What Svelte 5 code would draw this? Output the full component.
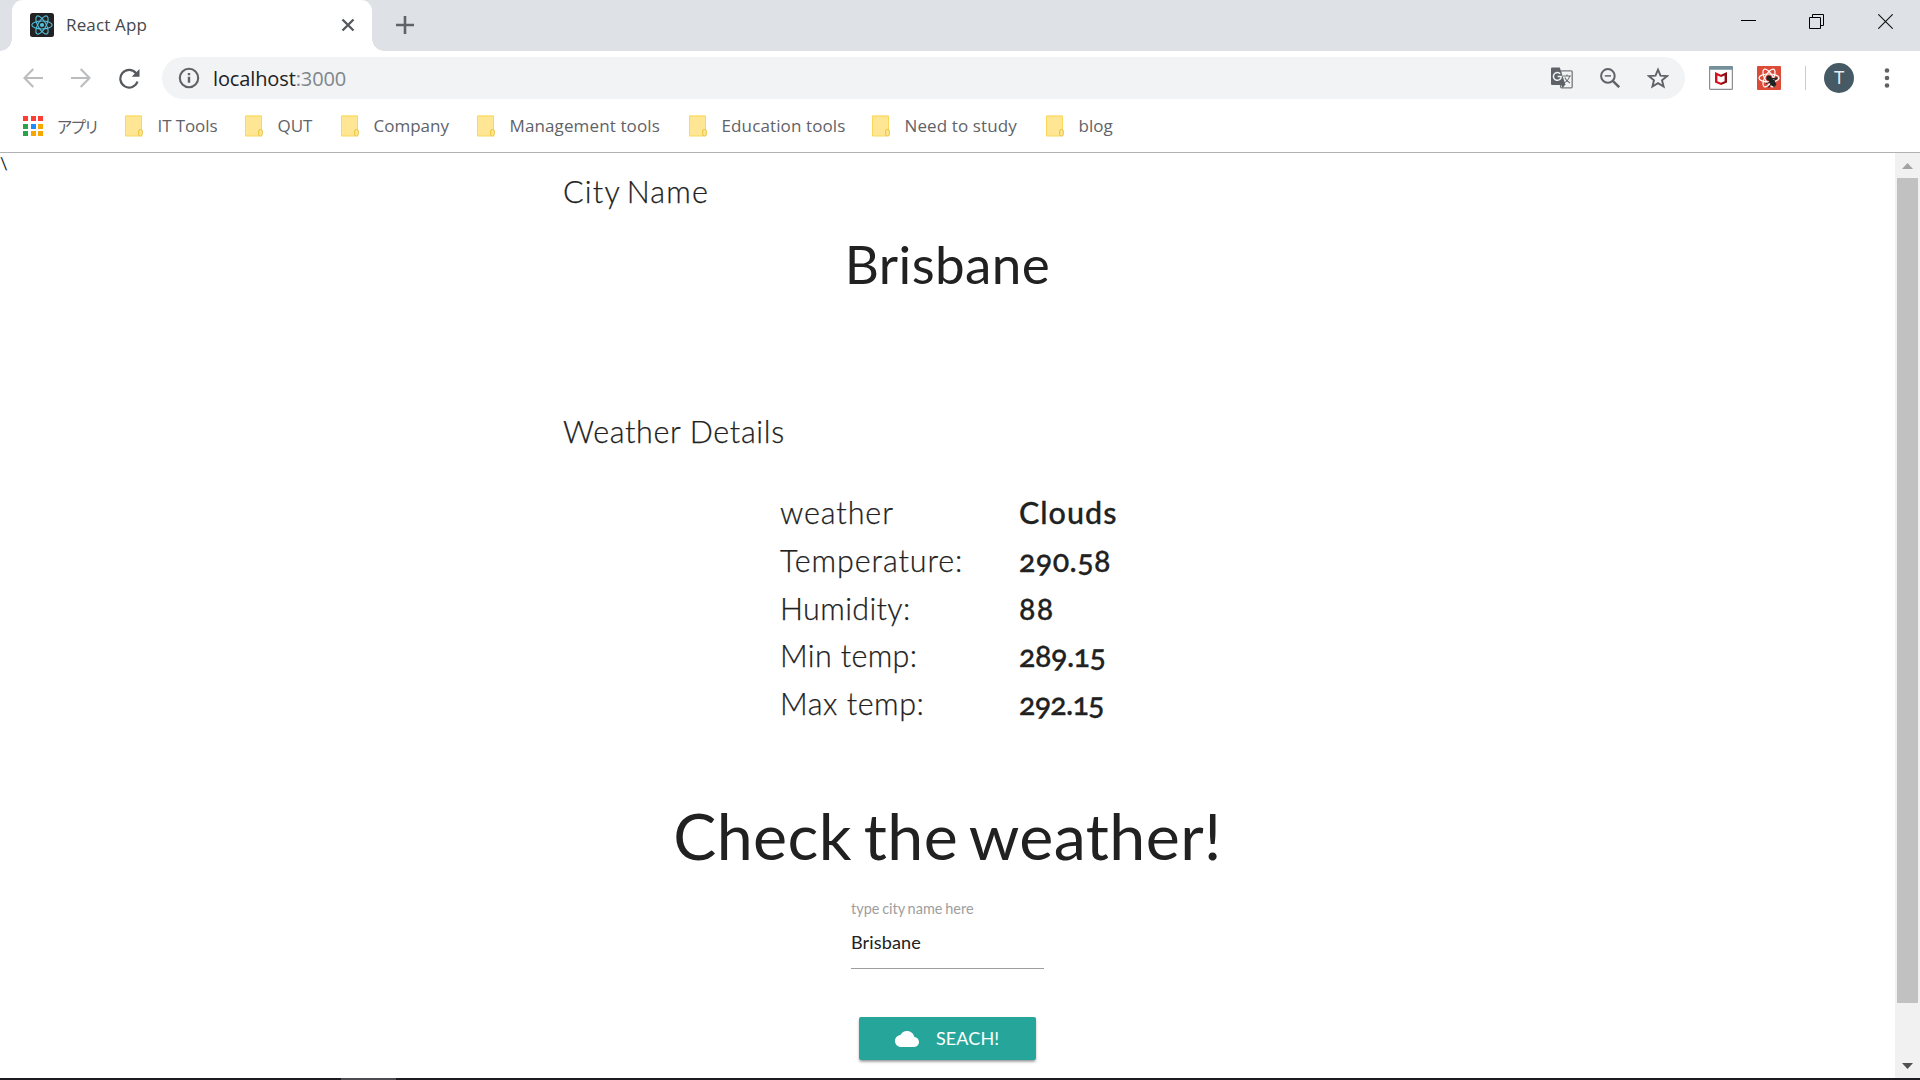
<script>
  const bookmarks = [
    { name: 'IT Tools', cls: 'it' },
    { name: 'QUT', cls: 'qut' },
    { name: 'Company', cls: 'company' },
    { name: 'Management tools', cls: 'management' },
    { name: 'Education tools', cls: 'education' },
    { name: 'Need to study', cls: 'study' },
    { name: 'blog', cls: 'blog' }
  ];
  const details = [
    { label: 'weather', value: 'Clouds', cls: 'r-weather' },
    { label: 'Temperature:', value: '290.58', cls: 'r-temp' },
    { label: 'Humidity:', value: '88', cls: 'r-hum' },
    { label: 'Min temp:', value: '289.15', cls: 'r-min' },
    { label: 'Max temp:', value: '292.15', cls: 'r-max' }
  ];
  const appColors = ['#ff3d33', '#ff3d33', '#ff3d33', '#2ba24c', '#1a8cff', '#f9a600', '#2ba24c', '#f9a600', '#f9a600'];
  let city = $state('Brisbane');
</script>

<div class="window">
  <header class="titlebar">
    <div class="tab">
      <svg class="favicon" viewBox="0 0 24 24">
        <rect width="24" height="24" rx="2.5" fill="#222" />
        <g fill="none" stroke="#53c1de" stroke-width="1.1">
          <ellipse cx="12" cy="12" rx="10.2" ry="4" />
          <ellipse cx="12" cy="12" rx="10.2" ry="4" transform="rotate(60 12 12)" />
          <ellipse cx="12" cy="12" rx="10.2" ry="4" transform="rotate(120 12 12)" />
        </g>
        <circle cx="12" cy="12" r="2.1" fill="#53c1de" />
      </svg>
      <span class="tab-title">React App</span>
      <svg class="tab-close" viewBox="0 0 14 14"><path d="M1.5 1.5l11 11M12.5 1.5l-11 11" stroke="#55585c" stroke-width="2.3" /></svg>
    </div>
    <svg class="newtab" viewBox="0 0 18 18"><path d="M9 0v18M0 9h18" stroke="#5f6368" stroke-width="2.6" /></svg>
    <div class="controls">
      <svg viewBox="0 0 15 15"><path d="M0 6.5h15" stroke="#000" /></svg>
      <svg viewBox="0 0 15 15"><path d="M.5 3.5h11v11H.5zM3.5 3.5v-3h11v11h-3" fill="none" stroke="#000" /></svg>
      <svg viewBox="0 0 15 15"><path d="M.3.3l14.4 14.4M14.7.3L.3 14.7" stroke="#111" stroke-width="1.1" /></svg>
    </div>
  </header>

  <nav class="toolbar">
    <svg class="nav" viewBox="0 0 20 20"><path d="M20 10H2M10.3 1L1.5 10l8.8 9" fill="none" stroke="#babcbe" stroke-width="2.1" /></svg>
    <svg class="nav" viewBox="0 0 20 20"><path d="M0 10h18M9.700 1l8.800 9-8.800 9" fill="none" stroke="#babcbe" stroke-width="2.1" /></svg>
    <svg class="nav reload" viewBox="0 0 21 21">
      <path d="M17 5.200A8.800 8.800 0 1 0 18.500 13.500" fill="none" stroke="#55585c" stroke-width="2.200" />
      <path d="M20.500 1v7.800h-7.800z" fill="#55585c" />
    </svg>
    <div class="omnibox">
      <svg class="info" viewBox="0 0 22 22">
        <circle cx="11" cy="11" r="9.200" fill="none" stroke="#5f6368" stroke-width="2.100" />
        <path d="M11 9.800v6M11 6v2.300" stroke="#5f6368" stroke-width="2.400" />
      </svg>
      <span class="host">localhost</span><span class="port">:3000</span>
      <div class="actions">
        <svg class="translate" viewBox="0 0 22 22">
          <rect x="9.600" y="3.800" width="11.600" height="17" rx="1" fill="#f1f3f4" stroke="#76797d" stroke-width="1.300" />
          <path d="M12 9h8M16 7.400V9M18.600 9c-.6 3-3 5.500-5.400 6.800M13.800 10.500c1 2.600 3.200 4.600 5.200 5.600" fill="none" stroke="#6c7074" stroke-width="1.100" />
          <path d="M1.300.5h7.500l5.700 17.500H1.300C.6 18 0 17.500 0 16.700V1.800C0 1 .6.500 1.300.500z" fill="#5f6368" />
          <path d="M10 17.500h4.500l-3 3.500z" fill="#5f6368" />
          <path d="M9.200 6.800A3.900 3.900 0 1 0 10.200 9.400H6.600" fill="none" stroke="#f1f3f4" stroke-width="1.500" />
        </svg>
        <svg class="zoom" viewBox="0 0 20 20">
          <circle cx="7.900" cy="7.900" r="6.800" fill="none" stroke="#5f6368" stroke-width="2" />
          <path d="M4.800 7.900h6.200" stroke="#5f6368" stroke-width="1.500" />
          <path d="M12.800 12.800l6.400 6.400" stroke="#5f6368" stroke-width="2.500" />
        </svg>
        <svg class="star" viewBox="0 0 22 22">
          <path d="M11 2.600l2.500 6 6.500.5-5 4.200 1.600 6.300L11 16.200l-5.600 3.400L7 13.300 2 9.100l6.500-.5z" fill="none" stroke="#5f6368" stroke-width="1.900" />
        </svg>
      </div>
    </div>
    <svg class="ext" viewBox="0 0 24 24">
      <rect x=".6" y=".6" width="22.800" height="22.800" rx="1" fill="#fcfcfc" stroke="#8b8f92" stroke-width="1.200" />
      <path d="M0 1.200Q0 0 1.200 0h21.600Q24 0 24 1.200V3.700H0z" fill="#75909b" />
      <path d="M6 6l6 2.800V11L8.400 9.400v5.800L12 16.800V19l-6-2.400z" fill="#d50f1c" />
      <path d="M18 6l-6 2.800V11l3.600-1.600v5.800L12 16.800V19l6-2.400z" fill="#8c0a12" />
    </svg>
    <svg class="ext ext-react" viewBox="0 0 24 24">
      <rect width="24" height="24" rx="1" fill="#dc4a38" />
      <g fill="none" stroke="#fff" stroke-width="1.200">
        <ellipse cx="12" cy="12" rx="10" ry="4" />
        <ellipse cx="12" cy="12" rx="10" ry="4" transform="rotate(60 12 12)" />
        <ellipse cx="12" cy="12" rx="10" ry="4" transform="rotate(120 12 12)" />
      </g>
      <circle cx="12" cy="12" r="2.600" fill="#222" />
      <ellipse cx="15.500" cy="16.300" rx="2.600" ry="4.600" transform="rotate(-38 15.500 16.300)" fill="#222" />
      <path d="M9 17.500l4-1M11.500 21.500l3-4M13.500 12.500l6 .200-.5-1.500M16 15l4-2.500M17 21.500v-3" fill="none" stroke="#222" stroke-width="1.200" />
    </svg>
    <span class="divider"></span>
    <span class="avatar">T</span>
    <svg class="menu" viewBox="0 0 6 22">
      <circle cx="3" cy="3.500" r="2.300" /><circle cx="3" cy="11" r="2.300" /><circle cx="3" cy="18.500" r="2.300" />
    </svg>
  </nav>

  <div class="bookmarks">
    <div class="apps">
      <span class="apps-grid">
        {#each appColors as color}<i style:background={color}></i>{/each}
      </span>
      <span class="apps-label">アプリ</span>
    </div>
    {#each bookmarks as b}
      <div class="bookmark">
        <svg class="folder" viewBox="0 0 18 22">
          <path d="M0 .500h16.500V21H0z" fill="#ffe694" />
          <path d="M.5 1h16v14M.5 1v20H14" fill="none" stroke="#fbd75b" />
          <rect x="13.700" y="14.500" width="3.600" height="6.600" rx="1.600" fill="#ffe694" stroke="#e6c23a" />
        </svg>
        <span class={b.cls}>{b.name}</span>
      </div>
    {/each}
  </div>

  <div class="viewport">
    <main>
      <div class="stray">\</div>
      <h5 class="city-heading">City Name</h5>
      <h3>{city}</h3>
      <h5 class="details-heading">Weather Details</h5>
      <dl>
        {#each details as d}
          <dt class={d.cls}>{d.label}</dt>
          <dd class={d.cls}>{d.value}</dd>
        {/each}
      </dl>
      <h2>Check the weather!</h2>
      <form onsubmit={(e) => e.preventDefault()}>
        <label for="city">type city name here</label>
        <input id="city" bind:value={city} />
        <button>
          <svg viewBox="0 0 24 16"><path d="M19.350 6.040C18.670 2.590 15.640 0 12 0 9.110 0 6.600 1.640 5.350 4.040 2.340 4.360 0 6.910 0 10c0 3.310 2.690 6 6 6h13c2.760 0 5-2.240 5-5 0-2.640-2.050-4.780-4.650-4.960z" fill="#fff" /></svg>
          <span>SEACH!</span>
        </button>
      </form>
    </main>
    <aside class="scrollbar">
      <svg viewBox="0 0 11 6"><path d="M5.500 0L11 6H0z" fill="#a3a3a3" /></svg>
      <div class="thumb"></div>
      <svg class="down" viewBox="0 0 11 6"><path d="M0 0h11L5.500 6z" fill="#505050" /></svg>
    </aside>
  </div>
  <footer><span></span></footer>
</div>

<style>
  :global(body) { margin: 0; background: #fff; overflow: hidden; }
  * { box-sizing: border-box; }
  svg { display: block; flex: none; }
  .window {
    width: 1920px; height: 1080px; display: flex; flex-direction: column;
    font-family: 'Open Sans', 'Noto Sans CJK JP', sans-serif; background: #fff; overflow: hidden;
  }
  .titlebar { height: 51px; flex: none; display: flex; background: #dee1e6; padding-left: 12px; }
  .tab {
    position: relative; width: 360px; height: 51px; display: flex; align-items: center;
    background: #fff; border-radius: 11px 11px 0 0; padding: 0 17px 1px 18px;
  }
  .tab::before, .tab::after { content: ''; position: absolute; bottom: 0; width: 12px; height: 12px; }
  .tab::before { left: -12px; background: radial-gradient(circle at 0 0, transparent 11.500px, #fff 12px); }
  .tab::after { right: -12px; background: radial-gradient(circle at 100% 0, transparent 11.500px, #fff 12px); }
  .favicon { width: 24px; height: 24px; }
  .tab-title { margin-left: 12px; flex: 1; font-size: 17px; line-height: 24px; color: #45484c; letter-spacing: .15px; }
  .tab-close { width: 14px; height: 14px; }
  .newtab { width: 18px; height: 18px; margin: 16px 0 0 24px; }
  .controls { margin-left: auto; display: grid; grid-template-columns: 68px 69px 15px; height: 15px; margin-top: 14px; margin-right: 27px; }
  .controls svg { width: 15px; height: 15px; }

  .toolbar { height: 54px; flex: none; display: flex; align-items: center; padding-left: 23px; }
  .nav { width: 20px; height: 20px; margin-right: 28px; }
  .reload { width: 21px; height: 21px; margin-right: 22px; }
  .omnibox { width: 1523px; height: 42px; border-radius: 21px; background: #f1f3f4; display: flex; align-items: center; padding: 0 16px; font-size: 20px; line-height: 28px; letter-spacing: -.12px; }
  .info { width: 22px; height: 22px; margin-right: 13px; }
  .host, .port { padding-top: 2px; }
  .host { color: #202124; }
  .port { color: #80868b; }
  .actions { margin-left: auto; display: flex; align-items: center; }
  .translate { width: 22px; height: 22px; margin-right: 27px; }
  .zoom { width: 20px; height: 20px; margin-right: 27px; }
  .star { width: 22px; height: 22px; }
  .ext { width: 24px; height: 24px; margin-left: 24px; }
  .divider { width: 1px; height: 24px; background: #c9cbce; margin: 0 18px 0 24px; }
  .avatar { width: 30px; height: 30px; border-radius: 50%; background: #455a64; color: #e8ecee; font: 18px/30px Roboto, sans-serif; text-align: center; }
  .menu { width: 6px; height: 22px; margin-left: 30px; fill: #5f6368; }

  .bookmarks {
    height: 48px; flex: none; border-bottom: 1px solid #b1b2b4; padding: 0 0 5px 23px;
    display: grid; grid-template-columns: 102px 120px 96px 136px 212px 183px 174px 100px; align-items: center;
    font-size: 17px; line-height: 24px; color: #5f6368; white-space: nowrap;
  }
  .apps, .bookmark { display: flex; align-items: center; }
  .apps-grid { display: grid; grid-template-columns: repeat(3, 5px); gap: 2.500px; margin-right: 14px; }
  .apps-grid i { height: 5px; }
  .apps-label { font-family: 'Noto Sans CJK JP', sans-serif; font-feature-settings: 'palt'; font-size: 16px; letter-spacing: -.8px; }
  .folder { width: 18px; height: 22px; margin-right: 14.500px; }
  .management, .study, .education { letter-spacing: .12px; }
  .it { letter-spacing: -.1px; }

  .viewport { flex: 1; min-height: 0; display: flex; }
  main { flex: 1; display: flex; flex-direction: column; font-family: Lato, sans-serif; color: #212121; }
  .stray { height: 18px; font-size: 17px; line-height: 22px; }
  h2, h3, h5, dl, dd { margin: 0; font-weight: 400; }
  h5 { font-size: 30.500px; line-height: 40px; font-weight: 300; margin-left: 563px; -webkit-text-stroke: .25px #212121; }
  .city-heading { letter-spacing: 1.200px; word-spacing: -3px; }
  .details-heading { letter-spacing: .65px; }
  h3 { font-size: 53px; line-height: 60px; margin: 22.500px 0 117.500px; text-align: center; letter-spacing: .4px; }
  dl {
    display: grid; grid-template-columns: 240px 200px; margin: 38px 0 67px 780px;
    font-size: 30.500px; line-height: 47.800px; font-variant-numeric: oldstyle-nums;
  }
  dt { font-weight: 300; -webkit-text-stroke: .25px #212121; }
  dd { font-weight: 500; -webkit-text-stroke: .3px #212121; }
  dt.r-weather, dt.r-temp { letter-spacing: .9px; }
  dt.r-hum, dt.r-min { letter-spacing: .35px; }
  dt.r-max { letter-spacing: .55px; }
  dd { margin-left: -1px; }
  dd.r-weather { letter-spacing: 1px; }
  dd.r-temp { letter-spacing: .4px; }
  dd.r-hum { letter-spacing: 1.200px; }
  dd.r-min { letter-spacing: -.5px; }
  dd.r-max { letter-spacing: -.8px; }
  h2 { font-size: 64.500px; line-height: 80px; text-align: center; letter-spacing: .4px; word-spacing: -5px; }
  form { width: 193px; margin: 24.500px auto 0; display: flex; flex-direction: column; }
  label { font-size: 14.500px; line-height: 20px; color: #9e9e9e; word-spacing: -1px; }
  input {
    width: 100%; height: 49.600px; border: 0; border-bottom: 1px solid #9e9e9e; padding: 0 0 4px; outline: 0;
    font: 18.125px Lato, sans-serif; letter-spacing: .1px; color: #212121; background: none;
  }
  button {
    align-self: center; width: 177px; height: 43px; margin-top: 48px; border: 0; border-radius: 2px; padding: 0 0 0 36px;
    display: flex; align-items: center; background: #26a69a; color: #fff; font: 18px Lato, sans-serif;
    box-shadow: 0 2px 3px rgba(0, 0, 0, .28), 0 3px 2px -2px rgba(0, 0, 0, .2);
  }
  button svg { width: 24px; height: 16px; margin-right: 17px; }
  button span { padding-bottom: 2px; letter-spacing: .1px; }

  .scrollbar { width: 25px; background: #f1f1f1; display: flex; flex-direction: column; align-items: center; padding-top: 10px; }
  .scrollbar svg { width: 11px; height: 6px; }
  .thumb { width: 21px; height: 825px; background: #c1c1c1; margin: 9px 0 60px; flex: none; }
  footer { height: 2px; flex: none; background: #1d1b1f; padding-left: 341px; }
  footer span { display: block; width: 55px; height: 2px; background: #4d4c50; }
</style>
